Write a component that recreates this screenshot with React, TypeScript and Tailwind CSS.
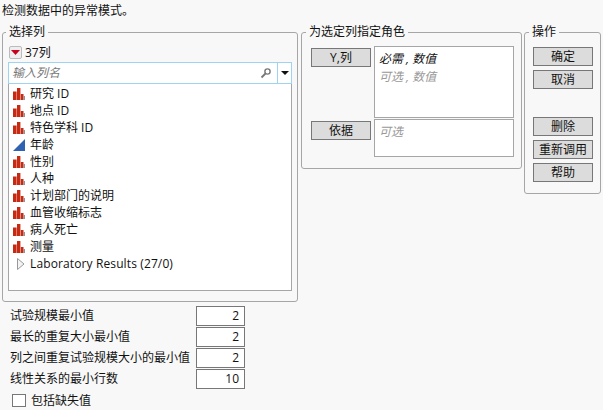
const font = { fontFamily: '"Open Sans", "Noto Sans CJK SC", sans-serif' };

function NomIcon() {
  return (
    <svg width="12" height="12" viewBox="0 0 12 12" className="shrink-0">
      <rect x="0" y="3.5" width="3.6" height="8.5" fill="#c62a12" />
      <rect x="4" y="0" width="3.4" height="12" fill="#c62a12" />
      <rect x="7.8" y="6" width="2.7" height="6" fill="#c62a12" />
      <rect x="10.5" y="8" width="1.5" height="4" fill="#9a8f8c" />
    </svg>
  );
}

function ContIcon() {
  return (
    <svg width="12" height="12" viewBox="0 0 12 12" className="shrink-0">
      <polygon points="0,12 12,0 12,12" fill="#2f62b0" />
    </svg>
  );
}

function Row({ icon, label }: { icon: "n" | "c"; label: string }) {
  return (
    <div className="flex h-[17px] items-center gap-[5px] pl-[4px] text-[12px] text-[#111]">
      {icon === "n" ? <NomIcon /> : <ContIcon />}
      <span>{label}</span>
    </div>
  );
}

function Btn({ label, className = "" }: { label: string; className?: string }) {
  return (
    <div className={`flex h-[19px] w-[60px] items-center justify-center border border-[#777] bg-[#dcdcdc] text-[12px] text-[#111] ${className}`}>
      {label}
    </div>
  );
}

function Param({ label, value }: { label: string; value: string }) {
  return (
    <div className="flex h-[20px] items-center">
      <div className="w-[186px] whitespace-nowrap text-[12px] text-[#111]">{label}</div>
      <div className="flex h-[20px] w-[49px] items-center justify-end border border-[#777] bg-white pr-[5px] text-[12px] text-[#111]">{value}</div>
    </div>
  );
}

const rows: { icon: "n" | "c"; label: string }[] = [
  { icon: "n", label: "研究 ID" },
  { icon: "n", label: "地点 ID" },
  { icon: "n", label: "特色学科 ID" },
  { icon: "c", label: "年龄" },
  { icon: "n", label: "性别" },
  { icon: "n", label: "人种" },
  { icon: "n", label: "计划部门的说明" },
  { icon: "n", label: "血管收缩标志" },
  { icon: "n", label: "病人死亡" },
  { icon: "n", label: "测量" },
];

export default function App() {
  return (
    <div className="h-[410px] w-[603px] overflow-hidden bg-[#f8f8f8] text-[12px] leading-none" style={font}>
      <div className="h-[26px] pl-[2px] pt-[5px] text-[#111]">检测数据中的异常模式。</div>
      <div className="flex items-start gap-[3px] pl-[2px]">
        <fieldset className="h-[276px] w-[296px] rounded-[3px] border border-[#a6a6a6] px-[5px]">
          <legend className="ml-[-2px] px-[3px] text-[12px] text-[#111]">选择列</legend>
          <div className="mt-[8px] flex h-[13px] items-center gap-[3px] pl-[1px]">
            <div className="flex h-[13px] w-[13px] items-center justify-center rounded-[2px] border border-[#bbb] bg-[#eee]">
              <svg width="9" height="5" viewBox="0 0 9 5"><polygon points="0,0 9,0 4.5,5" fill="#c8001e" /></svg>
            </div>
            <span className="text-[#111]">37列</span>
          </div>
          <div className="mt-[3px] flex h-[22px] w-[284px] items-center border border-[#9ed3f2] bg-white">
            <span className="flex-1 pl-[3px] italic text-[#777]">输入列名</span>
            <svg width="12" height="12" viewBox="0 0 12 12" className="mr-[5px]">
              <circle cx="7.5" cy="4.5" r="2.6" fill="none" stroke="#777" strokeWidth="1.4" />
              <line x1="5.5" y1="6.5" x2="1.5" y2="10.5" stroke="#777" strokeWidth="1.8" />
            </svg>
            <div className="flex h-full w-[14px] items-center justify-center border-l border-[#9ed3f2]">
              <svg width="8" height="4" viewBox="0 0 8 4"><polygon points="0,0 8,0 4,4" fill="#111" /></svg>
            </div>
          </div>
          <div className="h-[207px] w-[284px] border border-t-0 border-[#a6a6a6] bg-white pt-[1px]">
            {rows.map((r) => (
              <Row key={r.label} icon={r.icon} label={r.label} />
            ))}
            <div className="flex h-[17px] items-center gap-[5px] pl-[8px] text-[12px] text-[#111]">
              <svg width="8" height="12" viewBox="0 0 8 12"><polygon points="0.5,0.5 7,6 0.5,11.5" fill="#f4f4f4" stroke="#999" /></svg>
              <span className="tracking-[0.12px]">Laboratory Results (27/0)</span>
            </div>
          </div>
        </fieldset>

        <fieldset className="h-[143px] w-[221px] rounded-[3px] border border-[#a6a6a6]">
          <legend className="ml-[4px] px-[3px] text-[12px] text-[#111]">为选定列指定角色</legend>
          <div className="mt-[8px] flex gap-[3px] pl-[9px]">
            <Btn label="Y,列" className="mt-[2px]" />
            <div className="h-[72px] w-[140px] border border-[#a6a6a6] bg-white pl-[4px] pt-[6px] italic">
              <div className="h-[18px] text-[#111]">必需 , 数值</div>
              <div className="text-[#999]">可选 , 数值</div>
            </div>
          </div>
          <div className="mt-[1px] flex gap-[3px] pl-[9px]">
            <Btn label="依据" className="mt-[2px]" />
            <div className="h-[38px] w-[140px] border border-[#a6a6a6] bg-white pl-[4px] pt-[6px] italic text-[#999]">可选</div>
          </div>
        </fieldset>

        <fieldset className="-ml-[1px] h-[168px] w-[77px] rounded-[3px] border border-[#a6a6a6] pl-[8px]">
          <legend className="ml-[-4px] px-[3px] text-[12px] text-[#111]">操作</legend>
          <div className="mt-[9px] flex flex-col gap-[4px]">
            <Btn label="确定" />
            <Btn label="取消" />
            <Btn label="删除" className="mt-[24px]" />
            <Btn label="重新调用" />
            <Btn label="帮助" />
          </div>
        </fieldset>
      </div>

      <div className="mt-[4px] flex flex-col gap-[1px] pl-[10px]">
        <Param label="试验规模最小值" value="2" />
        <Param label="最长的重复大小最小值" value="2" />
        <Param label="列之间重复试验规模大小的最小值" value="2" />
        <Param label="线性关系的最小行数" value="10" />
      </div>
      <div className="mt-[5px] flex items-center gap-[5px] pl-[12px]">
        <div className="h-[13px] w-[14px] border border-[#777] bg-white" />
        <span className="text-[#111]">包括缺失值</span>
      </div>
    </div>
  );
}
